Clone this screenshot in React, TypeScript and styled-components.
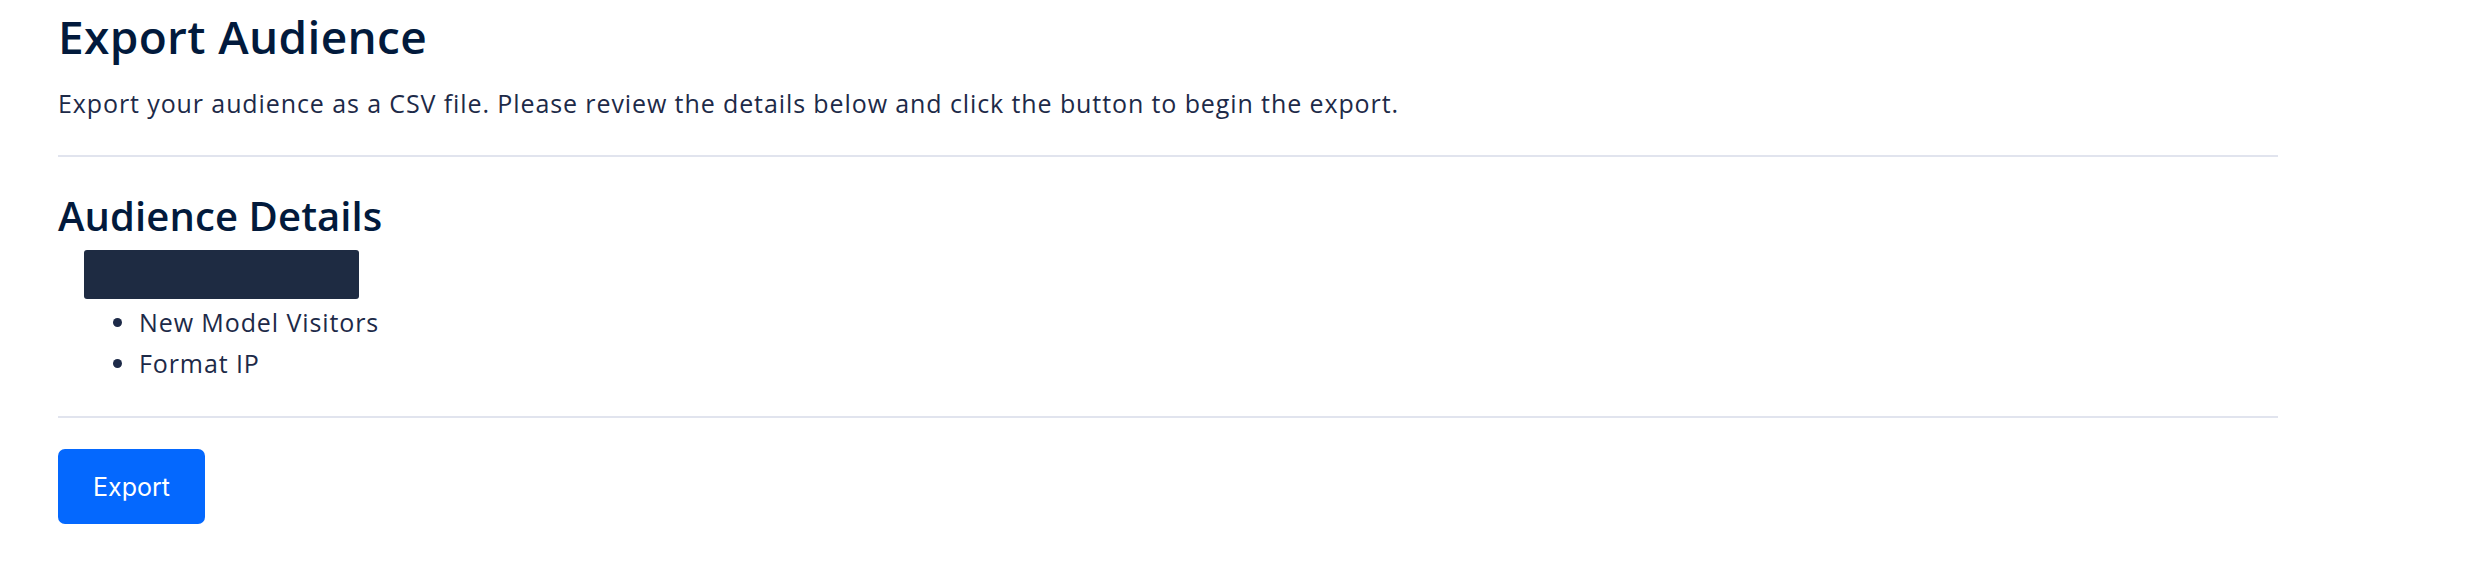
import React from "react";
import styled, { createGlobalStyle } from "styled-components";

const GlobalStyle = createGlobalStyle`
  html, body {
    margin: 0;
    padding: 0;
    background: #ffffff;
  }
  body {
    font-family: "Open Sans", "Roboto", sans-serif;
    color: #1d2a48;
  }
`;

const Page = styled.main`
  width: 2220px;
  padding: 0 58px;
  display: flex;
  flex-direction: column;
`;

const Title = styled.h1`
  margin: 5px 0 0;
  font-size: 46px;
  line-height: 62px;
  font-weight: 600;
  letter-spacing: 0.35px;
  color: #021a3c;
`;

const Lead = styled.p`
  margin: 18px 0 0;
  font-size: 25px;
  line-height: 36px;
  font-weight: 400;
  letter-spacing: 0.9px;
  color: #1d2a48;
`;

const Rule = styled.hr<{ $gap: number }>`
  margin: ${(p) => p.$gap}px 0 0;
  border: none;
  height: 2px;
  background: #e1e4ee;
`;

const SectionTitle = styled.h2`
  margin: 33px 0 0;
  font-size: 40px;
  line-height: 52px;
  font-weight: 600;
  letter-spacing: 0.1px;
  color: #021a3c;
`;

const Details = styled.div`
  margin-top: 8px;
  padding-left: 26px;
  display: flex;
  flex-direction: column;
`;

const Redacted = styled.span`
  display: block;
  width: 275px;
  height: 49px;
  border-radius: 3px;
  background: #1e2b42;
`;

const List = styled.ul`
  list-style: none;
  margin: 3px 0 0;
  padding: 0 0 0 55px;
`;

const Item = styled.li`
  position: relative;
  font-size: 25px;
  line-height: 41px;
  letter-spacing: 0.9px;
  color: #1d2a48;

  &::before {
    content: "";
    position: absolute;
    left: -26px;
    top: 16px;
    width: 9px;
    height: 9px;
    border-radius: 50%;
    background: #1d2a48;
  }
`;

const Actions = styled.div`
  margin-top: 31px;
  display: flex;
`;

const Button = styled.button`
  height: 75px;
  padding: 0 35px;
  border: none;
  border-radius: 7px;
  background: #0468fe;
  color: #ffffff;
  font-family: "Inter", "Roboto", sans-serif;
  font-size: 25px;
  font-weight: 400;
  cursor: pointer;
`;

export default function App() {
  return (
    <>
      <GlobalStyle />
      <Page>
        <Title>Export Audience</Title>
        <Lead>
          Export your audience as a CSV file. Please review the details below and click the button to begin the export.
        </Lead>
        <Rule $gap={34} />
        <SectionTitle>Audience Details</SectionTitle>
        <Details>
          <Redacted aria-label="Audience name (redacted)" />
          <List>
            <Item>New Model Visitors</Item>
            <Item>Format IP</Item>
          </List>
        </Details>
        <Rule $gap={32} />
        <Actions>
          <Button type="button">Export</Button>
        </Actions>
      </Page>
    </>
  );
}
